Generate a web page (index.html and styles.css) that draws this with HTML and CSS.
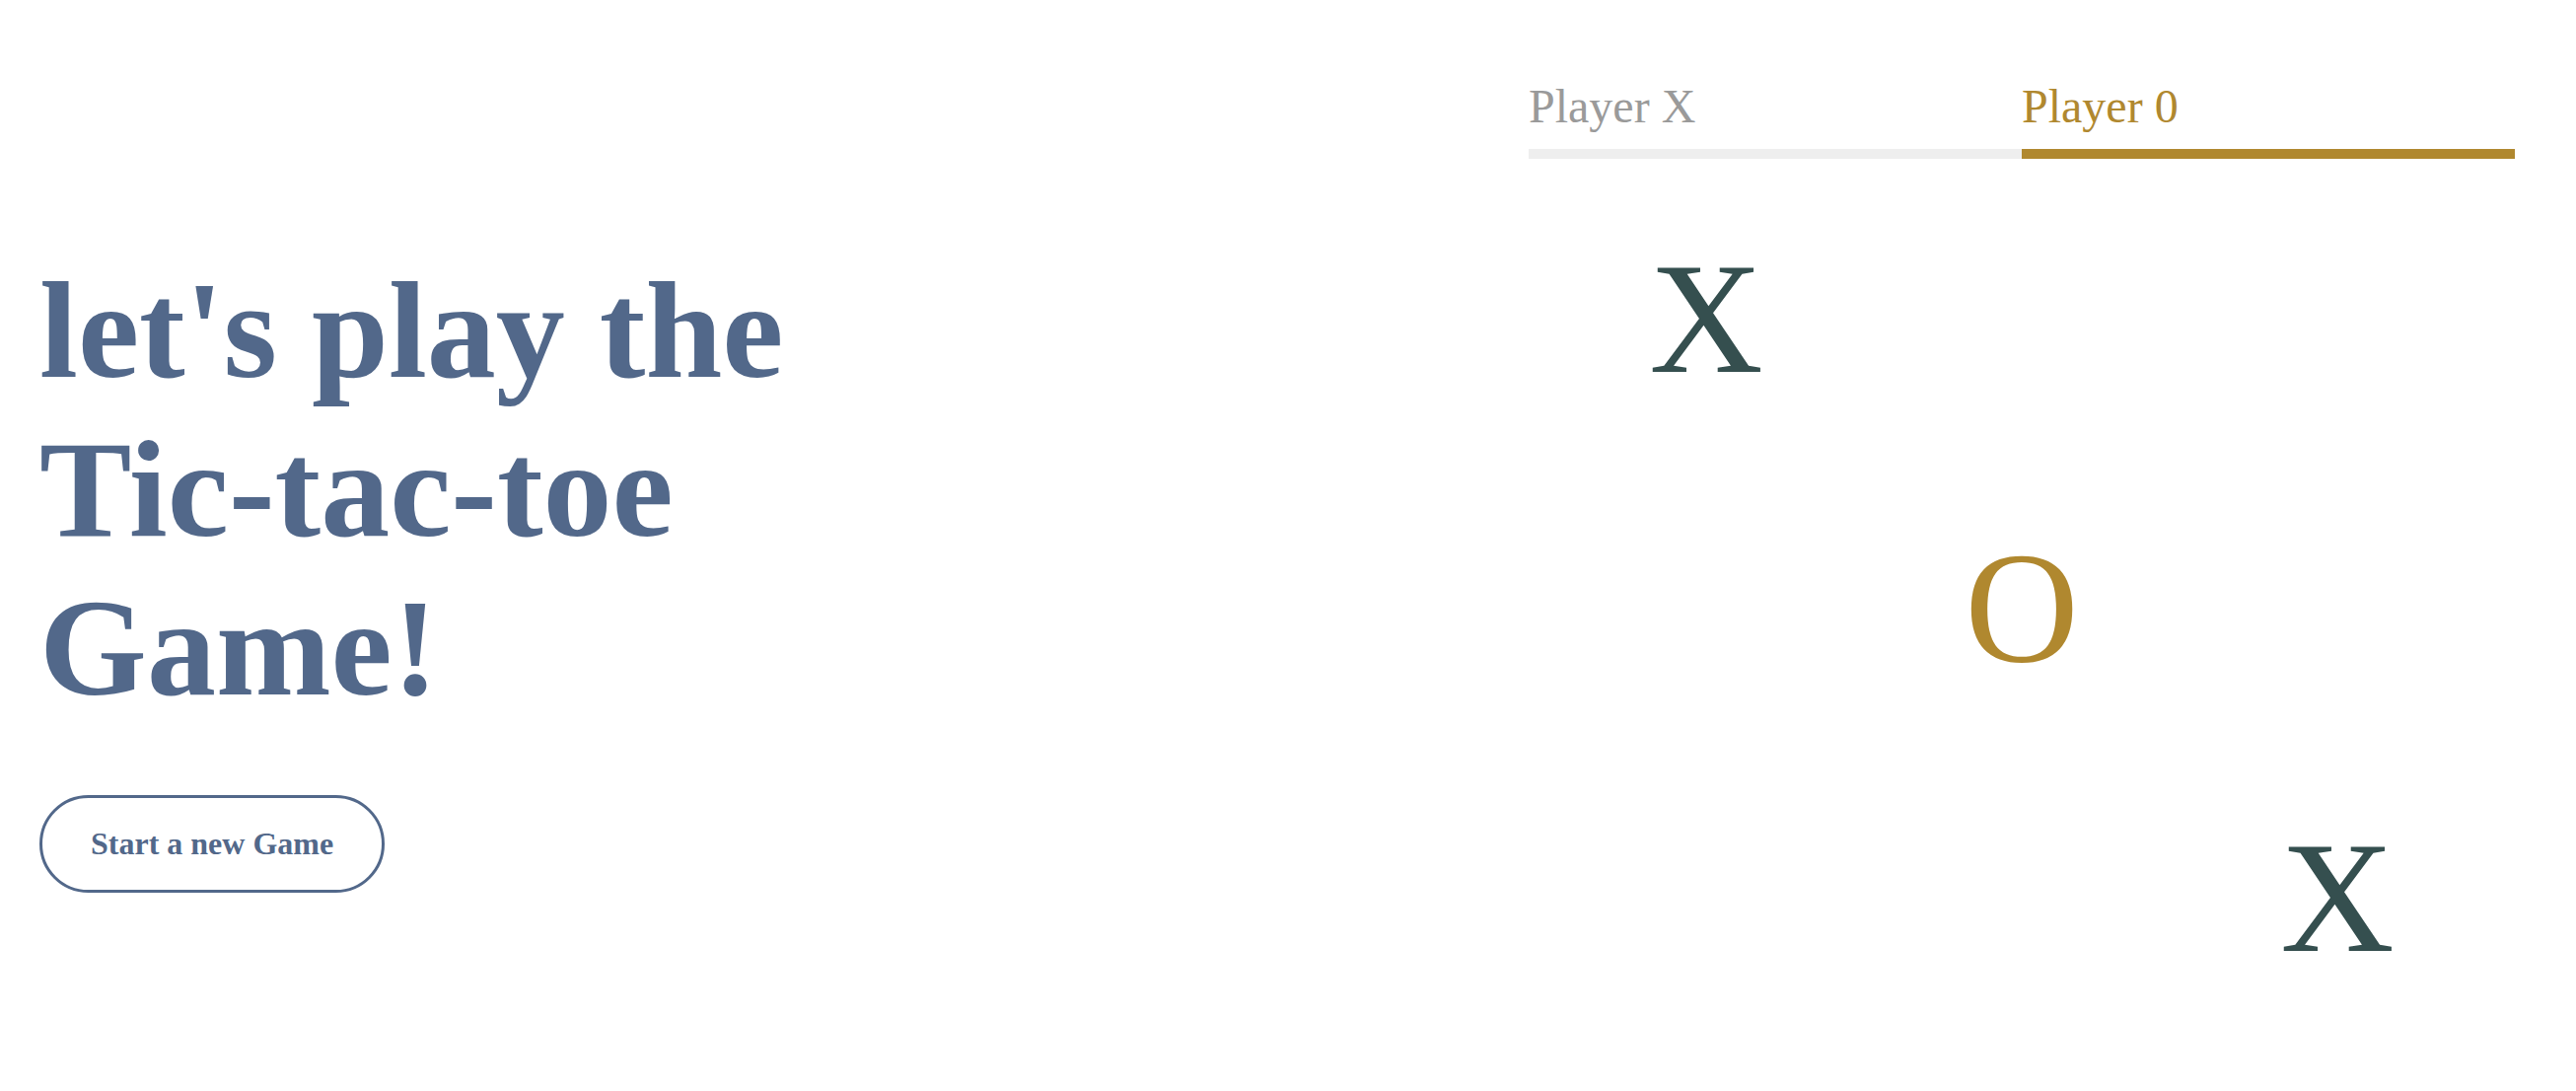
FILE: index.html
```html
<!DOCTYPE html>
<html lang="en">
<head>
<meta charset="utf-8">
<title>Tic-tac-toe</title>
<link rel="stylesheet" href="styles.css">
</head>
<body>
<main class="page">
  <section class="intro">
    <h1 class="title">let's play the Tic-tac-toe Game!</h1>
    <button class="btn-new" type="button">Start a new Game</button>
  </section>
  <section class="game">
    <div class="players">
      <div class="player">
        <span class="player-name">Player X</span>
        <span class="player-bar"></span>
      </div>
      <div class="player player-active">
        <span class="player-name">Player 0</span>
        <span class="player-bar"></span>
      </div>
    </div>
    <div class="board">
      <div class="cell cell-x">X</div>
      <div class="cell"></div>
      <div class="cell"></div>
      <div class="cell"></div>
      <div class="cell cell-o">O</div>
      <div class="cell"></div>
      <div class="cell"></div>
      <div class="cell"></div>
      <div class="cell cell-x">X</div>
    </div>
  </section>
</main>
</body>
</html>
```

FILE: styles.css
```css
html, body {
  margin: 0;
  padding: 0;
  background: #ffffff;
}

body {
  font-family: "Liberation Serif", "Times New Roman", serif;
}

.page {
  display: flex;
  justify-content: space-between;
  align-items: flex-start;
  padding: 0 62px 0 40px;
  height: 1106px;
  box-sizing: border-box;
}

.intro {
  width: 900px;
  padding-top: 254px;
  display: flex;
  flex-direction: column;
  align-items: flex-start;
}

.title {
  margin: 0;
  font-size: 140px;
  font-weight: 700;
  line-height: normal;
  color: #52688a;
}

.btn-new {
  margin-top: 69px;
  font-family: "Liberation Serif", "Times New Roman", serif;
  font-size: 32px;
  font-weight: 700;
  line-height: normal;
  color: #52688a;
  background: #ffffff;
  border: 3px solid #52688a;
  border-radius: 999px;
  padding: 28px 49px;
  cursor: pointer;
}

.game {
  width: 1000px;
  padding-top: 80px;
  display: flex;
  flex-direction: column;
  align-items: center;
}

.players {
  display: flex;
  width: 100%;
}

.player {
  flex: 1;
  display: flex;
  flex-direction: column;
}

.player-name {
  font-size: 48px;
  line-height: normal;
  color: #9a9a9a;
}

.player-bar {
  display: block;
  height: 10px;
  margin-top: 16px;
  background: #eeeeee;
}

.player-active .player-name {
  color: #b0882f;
}

.player-active .player-bar {
  background: #b0882f;
}

.board {
  margin-top: 16px;
  width: 960px;
  display: grid;
  grid-template-columns: repeat(3, 320px);
  grid-template-rows: repeat(3, 293.33px);
}

.cell {
  display: flex;
  align-items: center;
  justify-content: center;
  font-size: 160px;
  line-height: normal;
}

.cell-x {
  color: #354f4f;
}

.cell-o {
  color: #b0882f;
}
```
